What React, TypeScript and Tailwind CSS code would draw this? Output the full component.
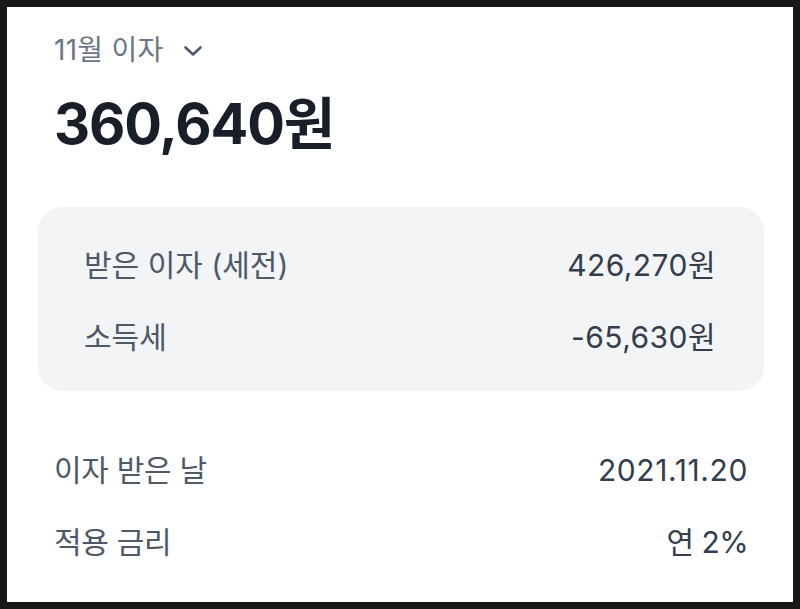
import React from "react";

const font = { fontFamily: "Inter, 'Noto Sans CJK KR', sans-serif" };

function Row({ label, value, labelClass, valueClass }: { label: string; value: string; labelClass: string; valueClass: string }) {
  return (
    <div className="flex items-center justify-between h-[40px]">
      <span className={labelClass}>{label}</span>
      <span className={valueClass}>{value}</span>
    </div>
  );
}

export default function App() {
  return (
    <div className="w-[800px] h-[609px] bg-[#181818] p-[7px]" style={font}>
      <div className="bg-white h-full pt-[25px] pl-[31px] pr-[29px] flex flex-col">
        <div className="flex items-center h-[36px] pl-[16px] gap-[19px]">
          <span className="text-[28px] text-[#6b7684] tracking-[0.01em] leading-[36px]">11월 이자</span>
          <svg width="20" height="12" viewBox="0 0 20 12" fill="none" className="mt-[2px]">
            <path d="M2.5 2.5 L10 9.5 L17.5 2.5" stroke="#4e5968" strokeWidth="2.6" strokeLinecap="round" strokeLinejoin="round" />
          </svg>
        </div>
        <div className="mt-[24px] pl-[16px] h-[64px] flex items-center">
          <span className="text-[56px] font-bold text-[#191f28] tracking-[-0.02em] leading-[64px]">360,640원</span>
        </div>
        <div className="mt-[51px] bg-[#f2f4f6] rounded-[24px] pt-[38px] pb-[34px] pl-[46px] pr-[48px] flex flex-col gap-[32px]">
          <Row label="받은 이자 (세전)" value="426,270원" labelClass="text-[30px] text-[#4e5968]" valueClass="text-[30px] text-[#333d4b] tracking-[0.015em]" />
          <Row label="소득세" value="-65,630원" labelClass="text-[30px] text-[#4e5968]" valueClass="text-[30px] text-[#333d4b] tracking-[0.015em]" />
        </div>
        <div className="mt-[59px] pl-[16px] pr-[16px] flex flex-col gap-[32px]">
          <Row label="이자 받은 날" value="2021.11.20" labelClass="text-[30px] text-[#4e5968] tracking-[-0.01em]" valueClass="text-[30px] text-[#333d4b] tracking-[0.02em]" />
          <Row label="적용 금리" value="연 2%" labelClass="text-[30px] text-[#4e5968] tracking-[-0.01em]" valueClass="text-[30px] text-[#333d4b] tracking-[-0.02em]" />
        </div>
      </div>
    </div>
  );
}
